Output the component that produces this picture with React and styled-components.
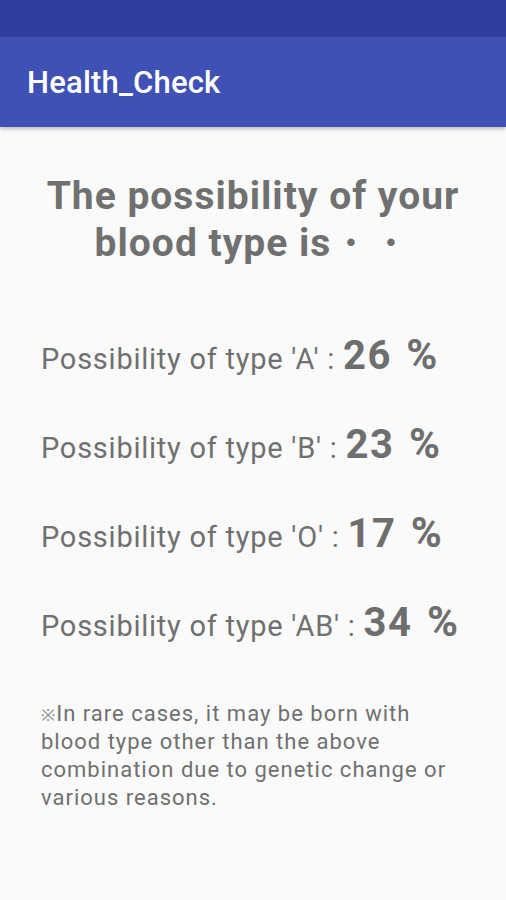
import React from "react";
import styled, { createGlobalStyle } from "styled-components";

const Global = createGlobalStyle`
  html, body { margin: 0; padding: 0; background: #fafafa; }
  body { font-family: Roboto, "Noto Sans", sans-serif; }
`;

const Screen = styled.div`
  width: 506px;
  height: 900px;
  background: #fafafa;
  display: flex;
  flex-direction: column;
  overflow: hidden;
`;

const StatusBar = styled.div`
  height: 37px;
  background: #303f9f;
  flex: none;
`;

const Toolbar = styled.header`
  height: 90px;
  background: #3f51b5;
  display: flex;
  align-items: center;
  padding: 0 27px;
  box-shadow: 0 2px 4px rgba(0, 0, 0, 0.25);
  position: relative;
  z-index: 1;
  flex: none;
`;

const Title = styled.h1`
  margin: 0;
  font-family: Roboto, sans-serif;
  font-weight: 500;
  font-size: 31px;
  letter-spacing: 0.2px;
  color: #ffffff;
`;

const Content = styled.main`
  display: flex;
  flex-direction: column;
  padding: 46px 41px 0;
  color: #707070;
`;

const Heading = styled.h2`
  margin: 0 0 64px;
  font-family: Roboto, sans-serif;
  font-weight: 700;
  font-size: 39px;
  line-height: 47px;
  letter-spacing: 1px;
  text-align: center;
  color: #707070;
`;

const Rows = styled.div`
  display: flex;
  flex-direction: column;
  gap: 42px;
`;

const Row = styled.div`
  display: flex;
  align-items: baseline;
  height: 47px;
`;

const Label = styled.span`
  font-size: 29px;
  font-weight: 400;
  letter-spacing: 0.75px;
  color: #707070;
  margin-right: 8px;
`;

const Value = styled.span`
  font-size: 40px;
  font-weight: 700;
  line-height: 47px;
  letter-spacing: 1.5px;
  word-spacing: 3px;
  color: #6e6e6e;
`;

const Percent = styled.span`
  font-size: 42px;
  letter-spacing: 0;
`;

const Note = styled.p`
  margin: 55px 0 0;
  font-size: 22px;
  line-height: 28px;
  letter-spacing: 1px;
  color: #707070;
`;

const Mark = styled.span`
  font-size: 17px;
  line-height: 1;
  letter-spacing: 0;
  margin-right: 1px;
  color: #8a8a8a;
`;

const data = [
  ["A", 26],
  ["B", 23],
  ["O", 17],
  ["AB", 34],
];

export default function App() {
  return (
    <Screen>
      <Global />
      <StatusBar />
      <Toolbar>
        <Title>Health_Check</Title>
      </Toolbar>
      <Content>
        <Heading>
          The possibility of your
          <br />
          blood type is・・
        </Heading>
        <Rows>
          {data.map(([t, v]) => (
            <Row key={t}>
              <Label>Possibility of type '{t}' :</Label>
              <Value>
                {v} <Percent>%</Percent>
              </Value>
            </Row>
          ))}
        </Rows>
        <Note>
          <Mark>※</Mark>In rare cases, it may be born with blood type other
          than the above combination due to genetic change or various reasons.
        </Note>
      </Content>
    </Screen>
  );
}
